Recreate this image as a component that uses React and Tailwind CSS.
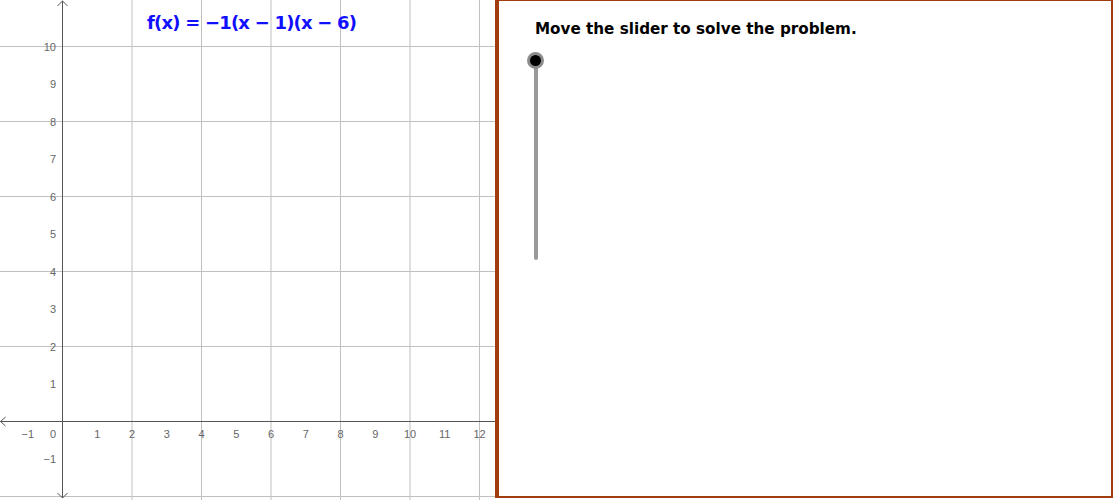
import React from 'react'

const ox = 62.5
const oy = 421.5
const ux = 34.75
const uy = 37.5
const X = (u) => ox + u * ux
const Y = (v) => oy - v * uy

function Graph() {
    const vGrid = [1, 2, 3, 4, 5, 6].map((k) => X(2 * k))
    const hGrid = [-1, 0, 1, 2, 3, 4, 5].map((k) => Y(2 * k))
    const yLabels = [1, 2, 3, 4, 5, 6, 7, 8, 9, 10, -1]
    const xLabels = [1, 2, 3, 4, 5, 6, 7, 8, 9, 10, 11, 12]

    return (
        <svg width="495" height="500" className="block">
            {vGrid.map((x) => (
                <line key={'v' + x} x1={x} y1="0" x2={x} y2="500" stroke="#c0c0c0" strokeWidth="1" />
            ))}
            {hGrid.map((y) => (
                <line key={'h' + y} x1="0" y1={y} x2="495" y2={y} stroke="#c0c0c0" strokeWidth="1" />
            ))}

            {/* axes */}
            <line x1={ox} y1="0.5" x2={ox} y2="498" stroke="#555" strokeWidth="1" />
            <line x1="0.5" y1={oy} x2="495" y2={oy} stroke="#555" strokeWidth="1" />
            <path d="M57.5,6 L62.5,1 L67.5,6" fill="none" stroke="#555" strokeWidth="1" />
            <path d="M57.5,493 L62.5,498 L67.5,493" fill="none" stroke="#555" strokeWidth="1" />
            <path d="M5.5,417 L0.5,421.5 L5.5,426" fill="none" stroke="#555" strokeWidth="1" />

            <g fontFamily="'Liberation Sans', Arial, sans-serif" fontSize="11" fill="#666">
                {yLabels.map((v) => (
                    <text key={'y' + v} x="56" y={Y(v) + 4} textAnchor="end">
                        {v < 0 ? '\u2212' + Math.abs(v) : v}
                    </text>
                ))}
                <text x="56" y="438" textAnchor="end">0</text>
                <text x={X(-1)} y="438" textAnchor="middle">{'\u22121'}</text>
                {xLabels.map((u) => (
                    <text key={'x' + u} x={X(u)} y="438" textAnchor="middle">{u}</text>
                ))}
            </g>

            <text
                x="147"
                y="29"
                fontFamily="'DejaVu Sans', sans-serif"
                fontWeight="bold"
                fontSize="18"
                fill="#1010ff"
                textLength="210"
                lengthAdjust="spacing"
            >
                {'f(x) = \u22121(x \u2212 1)(x \u2212 6)'}
            </text>
        </svg>
    )
}

export default function App() {
    return (
        <div className="w-[1115px] h-[500px] bg-white flex overflow-hidden">
            <div className="w-[495px] h-[500px] shrink-0">
                <Graph />
            </div>
            <div className="w-[618px] h-[498px] border-t border-r-2 border-b-2 border-l-4 border-[#a13c0e]">
                <div className="pt-[18px] pl-9 flex flex-col items-start">
                    <p className="font-['DejaVu_Sans',sans-serif] font-bold text-[15.2px] leading-5 text-black">
                        Move the slider to solve the problem.
                    </p>
                </div>
                <div className="ml-7 mt-[13px] relative w-[17px] h-[210px]">
                    <div className="absolute left-[6.5px] top-[8px] w-1 h-[200px] rounded-full bg-[#999]" />
                    <div className="absolute left-0 top-0 w-[17px] h-[17px] rounded-full bg-black border-[3px] border-[#8c8c8c]" />
                </div>
            </div>
        </div>
    )
}
